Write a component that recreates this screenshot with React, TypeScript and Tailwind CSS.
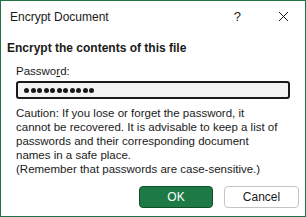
import React from 'react';

const font = { fontFamily: '"Liberation Sans", Arial, sans-serif' };

const dots = Array.from({ length: 11 });

export default function App() {
  return (
    <div
      className="w-[306px] h-[217px] border border-[#217346] bg-white text-[#1a1a1a] flex flex-col text-[12px]"
      style={font}
    >
      {/* title bar */}
      <div className="h-[31px] flex items-center pl-[9px] pr-[16px]">
        <span className="text-[12px]">Encrypt Document</span>
        <span className="ml-auto mr-[37px] text-[13px]">?</span>
        <svg width="11" height="11" viewBox="0 0 11 11">
          <path d="M1 1 L10 10 M10 1 L1 10" stroke="#1a1a1a" strokeWidth="1" fill="none" />
        </svg>
      </div>

      <div className="pl-[6px] mt-[8px] font-bold leading-[16px]">Encrypt the contents of this file</div>

      <div className="pl-[15px] mt-[7px] leading-[16px] text-[11.5px]">
        Passwo<u>r</u>d:
      </div>

      <div className="ml-[15px] mr-[15px] mt-[2px] h-[18px] rounded-[3px] border-2 border-[#1a1a1a] bg-[#f3f3f3] flex items-center pl-[6px] gap-[1.5px]">
        {dots.map((_, i) => (
          <div key={i} className="w-[5px] h-[5px] rounded-full bg-[#1a1a1a]" />
        ))}
      </div>

      <div className="pl-[15px] pr-[10px] mt-[7px] leading-[14px] text-[11.5px]">
        Caution: If you lose or forget the password, it
        <br />
        cannot be recovered. It is advisable to keep a list of
        <br />
        passwords and their corresponding document
        <br />
        names in a safe place.
        <br />
        (Remember that passwords are case-sensitive.)
      </div>

      <div className="mt-auto mb-[8px] flex justify-end gap-[11px] pr-[6px]">
        <button className="w-[74px] h-[22px] rounded-[4px] bg-[#1e7a45] border border-[#0f4f2a] text-white text-[12px]">
          OK
        </button>
        <button className="w-[75px] h-[22px] rounded-[4px] bg-white border border-[#c4c4c4] text-[12px]">
          Cancel
        </button>
      </div>
    </div>
  );
}
